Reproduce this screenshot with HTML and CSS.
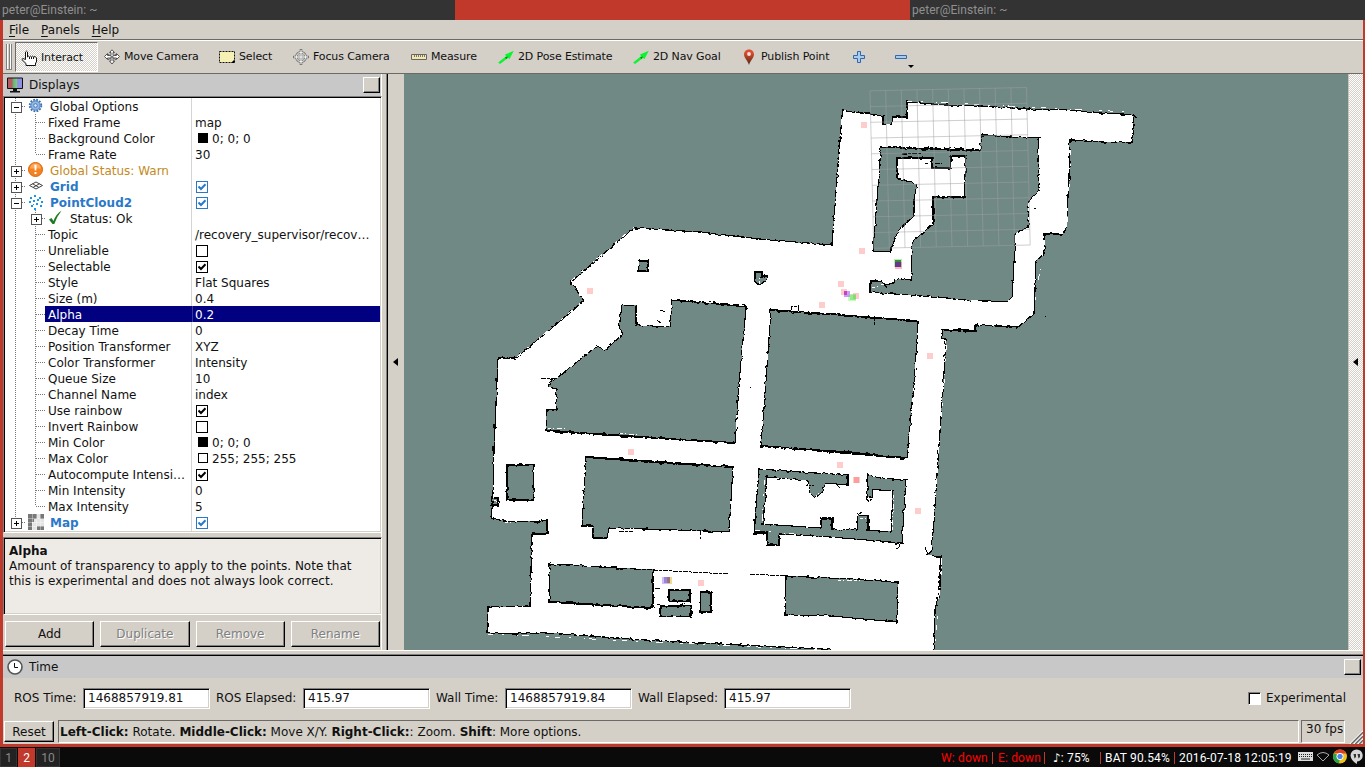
FILE: index.html
```html
<!DOCTYPE html>
<html lang="en">
<head>
<meta charset="utf-8">
<title>RViz</title>
<link rel="stylesheet" href="styles.css">
</head>
<body>
<svg class="defs" width="0" height="0">
  <symbol id="tick" viewBox="0 0 8 8"><path d="M.5 3.500 3 6 7.500 1.300" fill="none" stroke="currentColor" stroke-width="2"/></symbol>
  <symbol id="arrow" viewBox="0 0 16 16"><path d="M.2 13.500 8 7.200 7 5.500 15.800 1.800 11.500 10 10 9 2 15z" fill="#0bf52e"/><path d="M7 8.500 10 7.500 8.500 10z" fill="#087a1c"/></symbol>
</svg>

<header class="titles">
  <div class="title">peter@Einstein: ~</div>
  <div class="title active"></div>
  <div class="title">peter@Einstein: ~</div>
</header>

<main class="window">
  <nav class="menu"><span><u>F</u>ile</span><span><u>P</u>anels</span><span><u>H</u>elp</span></nav>

  <div class="toolbar">
    <i class="grip"></i>
    <div class="tool w-interact pressed">
      <svg width="16" height="16" viewBox="0 0 16 16"><path d="M4.500 9V2Q5.500.3 6.500 2V7Q7.500 5.400 8.500 7 9.500 5.400 10.500 7 11.500 5.400 12.500 7 14.500 5.500 15.500 8V12L14.500 13V15.500H5V13.500L.8 9.500Q1.500 7.500 4.500 9.500z" fill="#fff" stroke="#111"/><path d="M8.500 7V9M10.500 7V9M12.500 7V9" stroke="#111"/></svg>Interact</div>
    <div class="tool w-move">
      <svg width="16" height="16" viewBox="0 0 16 16"><path d="M8 .8 10.500 3.500H9V6.500H12.500V4.500L15.500 7.500 12.500 10.500V9H9V12H10.500L8 15 5.500 12H7V9H3.500V10.500L.5 7.500 3.500 4.500V6.500H7V3.500H5.500z" fill="#fff" stroke="#555"/><path d="M4 5 12 11M12 5 4 11" stroke="#666"/></svg>Move Camera</div>
    <div class="tool w-select">
      <svg width="16" height="16" viewBox="0 0 16 16"><path d="M.5 2.500h15v11H.5z" fill="#f7f0b4" stroke="#111" stroke-dasharray="2 1"/><path d="M15.500 10.500V14H12z"/></svg>Select</div>
    <div class="tool w-focus">
      <svg width="16" height="16" viewBox="0 0 16 16"><path d="M8 0V16M0 8H16" stroke="#777" stroke-width="2.600"/><circle cx="8" cy="8" r="4.700" fill="#d4d0c8" stroke="#777" stroke-width="2.600"/><path d="M8 4V12M4 8H12" stroke="#888" stroke-width="2.400"/><circle cx="8" cy="8" r="4.700" fill="none" stroke="#eee"/><path d="M8 1V15M1 8H15" stroke="#fff"/></svg>Focus Camera</div>
    <div class="tool w-measure">
      <svg width="16" height="16" viewBox="0 0 16 16"><path d="M.5 5.500h15v5H.5z" fill="#f2e9a8" stroke="#666"/><path d="M3.500 6V8M5.500 6V8M7.500 6V8M9.500 6V8M11.500 6V8M13.500 6V8" stroke="#777"/></svg>Measure</div>
    <div class="tool w-pose"><svg width="16" height="16"><use href="#arrow"/></svg>2D Pose Estimate</div>
    <div class="tool w-nav"><svg width="16" height="16"><use href="#arrow"/></svg>2D Nav Goal</div>
    <div class="tool w-publish">
      <svg width="16" height="16" viewBox="0 0 16 16"><defs><linearGradient id="pin" x2="0" y2="1"><stop offset=".2" stop-color="#df4b30"/><stop offset="1" stop-color="#4e2b16"/></linearGradient></defs><path d="M8 16C7 12 3 9 3 5.500 3-1.300 13-1.300 13 5.500 13 9 9 12 8 16z" fill="url(#pin)"/><circle cx="8" cy="5" r="1.900" fill="#eee4dc"/></svg>Publish Point</div>
    <div class="tool w-plus"><svg width="12" height="12" viewBox="0 0 12 12"><path d="M4.500.5h3v4h4v3h-4v4h-3v-4h-4v-3h4z" fill="#a9cbef" stroke="#2f68ad"/></svg></div>
    <div class="tool w-minus"><svg width="12" height="12" viewBox="0 0 12 12"><path d="M.5 4.500h11v3H.5z" fill="#a9cbef" stroke="#2f68ad"/></svg><i class="drop"></i></div>
  </div>

  <div class="work">
    <aside class="displays">
      <div class="dock-title">
        <svg width="16" height="16" viewBox="0 0 16 16"><defs><linearGradient id="scr"><stop offset=".3" stop-color="#b55a63"/><stop offset=".38" stop-color="#69b273"/><stop offset=".6" stop-color="#7fc68a"/><stop offset=".68" stop-color="#8d8fe0"/></linearGradient></defs><path d="M.5 1h15v10.500H.5z" fill="url(#scr)" stroke="#111"/><path d="M6 12h4v2H6zM3 14h10v1.500H3z" fill="#111"/></svg>
        Displays<b class="float"></b></div>
      <div class="tree">
        <div class="row"><div class="name"><i class="g first x minus"></i>
          <svg class="ic" viewBox="0 0 16 16"><circle cx="7.500" cy="7.500" r="5.800" fill="none" stroke="#3a6fae" stroke-width="1.800" stroke-dasharray="1.800 1.240"/><circle cx="7.500" cy="7.500" r="4.700" fill="#8fb6e2" stroke="#4a7dba"/><circle cx="7.500" cy="7.500" r="1.800" fill="#dce9f7" stroke="#4a7dba"/></svg><span>Global Options</span></div></div>
        <div class="row"><div class="name"><i class="g v"></i><i class="g t"></i><em>Fixed Frame</em></div><div class="val">map</div></div>
        <div class="row"><div class="name"><i class="g v"></i><i class="g t"></i><em>Background Color</em></div><div class="val"><i class="sw black"></i>0; 0; 0</div></div>
        <div class="row"><div class="name"><i class="g v"></i><i class="g l"></i><em>Frame Rate</em></div><div class="val">30</div></div>
        <div class="row warn"><div class="name"><i class="g x"></i>
          <svg class="ic" viewBox="0 0 16 16"><circle cx="7.500" cy="7.500" r="7" fill="#f58220" stroke="#d9640a"/><path d="M2 6.500Q2.500 1.500 7.500 1.500T13 6.500z" fill="#ffa85c"/><path d="M6.400 2.700h2.200L8.300 8.500H6.700zM6.500 10h2v2h-2z" fill="#fff"/></svg><span>Global Status: Warn</span></div></div>
        <div class="row blue"><div class="name"><i class="g x"></i>
          <svg class="ic" viewBox="0 0 16 16"><path d="M1.500 7.500 8 4 14.500 7.500 8 11zM4.500 5.700 11 9.500M11.500 5.700 5 9.500" fill="none" stroke="#444"/></svg><span>Grid</span></div><div class="val"><i class="ck"><svg><use href="#tick"/></svg></i></div></div>
        <div class="row blue"><div class="name"><i class="g x minus"></i>
          <svg class="ic" viewBox="0 0 16 16"><path d="M6 1h2v2H6zM11 3h2v2h-2zM2 3h2v2H2zM1 7h2v2H1zM5 6h2v2H5zM9 5h2v2H9zM13 7h2v2h-2zM8 9h2v2H8zM3 11h2v2H3zM12 11h2v2h-2zM6 14h2v2H6zM5 10h1v1H5z" fill="#1d93f0"/></svg><span>PointCloud2</span></div><div class="val"><i class="ck"><svg><use href="#tick"/></svg></i></div></div>
        <div class="row"><div class="name"><i class="g v"></i><i class="g x"></i>
          <svg class="ic" viewBox="0 0 16 16"><path d="M1 9.500 3.500 8 5.500 11Q8 4 13.500.8 8.500 7 6.300 14H4.500z" fill="#1d7a23"/></svg><span>Status: Ok</span></div></div>
        <div class="row"><div class="name"><i class="g v"></i><i class="g t"></i><em>Topic</em></div><div class="val">/recovery_supervisor/recov…</div></div>
        <div class="row"><div class="name"><i class="g v"></i><i class="g t"></i><em>Unreliable</em></div><div class="val"><i class="ck"></i></div></div>
        <div class="row"><div class="name"><i class="g v"></i><i class="g t"></i><em>Selectable</em></div><div class="val"><i class="ck"><svg><use href="#tick"/></svg></i></div></div>
        <div class="row"><div class="name"><i class="g v"></i><i class="g t"></i><em>Style</em></div><div class="val">Flat Squares</div></div>
        <div class="row"><div class="name"><i class="g v"></i><i class="g t"></i><em>Size (m)</em></div><div class="val">0.4</div></div>
        <div class="row sel"><div class="name"><i class="g v"></i><i class="g t"></i><em>Alpha</em></div><div class="val">0.2</div></div>
        <div class="row"><div class="name"><i class="g v"></i><i class="g t"></i><em>Decay Time</em></div><div class="val">0</div></div>
        <div class="row"><div class="name"><i class="g v"></i><i class="g t"></i><em>Position Transformer</em></div><div class="val">XYZ</div></div>
        <div class="row"><div class="name"><i class="g v"></i><i class="g t"></i><em>Color Transformer</em></div><div class="val">Intensity</div></div>
        <div class="row"><div class="name"><i class="g v"></i><i class="g t"></i><em>Queue Size</em></div><div class="val">10</div></div>
        <div class="row"><div class="name"><i class="g v"></i><i class="g t"></i><em>Channel Name</em></div><div class="val">index</div></div>
        <div class="row"><div class="name"><i class="g v"></i><i class="g t"></i><em>Use rainbow</em></div><div class="val"><i class="ck"><svg><use href="#tick"/></svg></i></div></div>
        <div class="row"><div class="name"><i class="g v"></i><i class="g t"></i><em>Invert Rainbow</em></div><div class="val"><i class="ck"></i></div></div>
        <div class="row"><div class="name"><i class="g v"></i><i class="g t"></i><em>Min Color</em></div><div class="val"><i class="sw black"></i>0; 0; 0</div></div>
        <div class="row"><div class="name"><i class="g v"></i><i class="g t"></i><em>Max Color</em></div><div class="val"><i class="sw"></i>255; 255; 255</div></div>
        <div class="row"><div class="name"><i class="g v"></i><i class="g t"></i><em>Autocompute Intensi…</em></div><div class="val"><i class="ck"><svg><use href="#tick"/></svg></i></div></div>
        <div class="row"><div class="name"><i class="g v"></i><i class="g t"></i><em>Min Intensity</em></div><div class="val">0</div></div>
        <div class="row"><div class="name"><i class="g v"></i><i class="g l"></i><em>Max Intensity</em></div><div class="val">5</div></div>
        <div class="row blue"><div class="name"><i class="g last x"></i>
          <svg class="ic" viewBox="0 0 16 16"><path d="M0 0h16v16H0z" fill="#e4e4e4"/><path d="M0 0h9v5H6v3H4v8H0zM12 0h4v5h-4zM9 12h7v4H9z" fill="#777"/><path d="M4.500 0V16M8.500 0V16M12.500 0V16M0 4.500H16M0 8.500H16M0 12.500H16" stroke="#fff" stroke-opacity=".35"/></svg><span>Map</span></div><div class="val"><i class="ck"><svg><use href="#tick"/></svg></i></div></div>
      </div>
      <div class="help"><b>Alpha</b><br>Amount of transparency to apply to the points. Note that<br>this is experimental and does not always look correct.</div>
      <div class="buttons"><div class="btn">Add</div><div class="btn off">Duplicate</div><div class="btn off">Remove</div><div class="btn off">Rename</div></div>
    </aside>
    <div class="splitter"><i class="tri"></i></div>

    <svg class="map" width="944" height="576" viewBox="404 74 944 576">
      <defs><filter id="rough" filterUnits="userSpaceOnUse" x="404" y="74" width="944" height="576" color-interpolation-filters="sRGB"><feTurbulence type="fractalNoise" baseFrequency=".22" numOctaves="2" seed="4"/><feDisplacementMap in="SourceGraphic" scale="3.200" xChannelSelector="R" yChannelSelector="G"/></filter></defs>
      <g filter="url(#rough)">
      <!-- free space -->
      <g class="free">
        <path d="M842.500 110.500 862 113 883 115.500V124.500H892L893 117H907V102L945 105 981 106 1027 109 1066 110 1100 113 1133 114.500 1134 126 1132 143 1102 142 1070 140 1069 178 1067 215 1066 229 1062 234H1045L1044 254 1036 261 1035 290 1034 314 1018 327 976 325V331L960 329 943 330 942 338 946 339 943 390 938 460 934 520 931 552 926 555 941 557 940 590 935 610 934 654H860L823 649 760 646 700 643 660 641 645 640 590 636 545 633 515 634 487 633 488 607 530 606 531 570 532 534 547 534V520L537 522 502 521 491 517 492 508 500 502 493 497 494 450 498 358H516L548 331 584 301 571 282 602 255 634 228 700 232 760 239 832 245 837 178z"/>
      </g>
      <!-- unknown areas enclosed by walls -->
      <g class="hole">
        <path d="M881 147 920 149 980 151 982 135 1010 137 1039 138 1038 160 1039 191 1029 201 1028 227 1015 234 1014 262 1012 298 1007 302 965 300 920 296 870 292V281L882 281 885 285 894 283 895 279 911 280 912 242 933 224V197L964 197 966 156H951V168H932V158H897V178L917 184 914 199V216L898 231 890 252 873 251 877 200z"/>
        <path d="M622 305 636 306V325L670 327 672 300 700 302 746 307 744 330 740 373 735 443 680 439 600 434 546 430 547 410H556L557 389 548 387 550 382 557 378 598 345 604 351 623 334 619 328z"/>
        <path d="M771 310 835 314 918 322 915 370 913 395 907 458 850 452 805 449 761 446 766 380z"/>
        <path d="M586 457 650 461 733 467 731 500 729 532 680 530 609 528 607 538H593L592 526H582z"/>
        <path d="M507 465H534L533.500 500H507z"/>
        <path d="M759 469 800 472 848 475V485L825 483 823 491 815 498 810 493 808 481 767 477 763 524 821 528 822 519H832V529L857 530 858 515 868 516V530L891 532 893 491 880 490 873 489 872 497 867 498 868 475 880 478 906 480 904 510 902 543 878 541 830 537 780 534 779 545H767L766 533H754z"/>
        <path d="M550 564 600 567 653 570 652 608 600 605 549 602z"/>
        <path d="M786 576 850 579 898 582 897 622 830 616 785 615z"/>
        <path d="M669 590H690V601H669zM701 592H711V612H700zM660 606H691V617L660 616zM639 261H648V271H638zM755 272H762V276L768 276 765 281 760 285 755 282zM492 498H498V505H492z"/>
      </g>
      <!-- thick wall sections -->
      <g class="wall">
        <path d="M885 147 980 150M935 149 964 150M675 300 745 306M771 310 917 321M547 431 735 443M586 457 732 467M620 460 700 465M600 434 650 438M762 446 906 458M550 602 652 608M653 571V608M754 532H767V545H779V535M941 330 974 331 976 323M848 475V486M941 557 939 590M743 305 747 306"/>
      </g>
      </g>
      <!-- gaps where the laser return is missing -->
      <g class="gap">
        <path d="M842 120 833 240M907 101 1130 112M1040 150 1041 190M872 160 870 245M1071 150 1067 225M1045 240 1035 300M883 146 980 150M870 293 1005 303M571 281 634 227M517 357 582 302M499 370 493 500M672 299 746 306M747 320 735 440M770 320 761 440M919 330 908 455M947 345 931 550M585 460 581 524M734 470 730 530M488 634 820 650M550 563 650 569M786 574 898 581M782 617 897 623M942 558 935 645M654 574 655 606M755 530 900 545M536 468V498M669 602H690M712 595V610M638 261V270M765 480 762 522M892 494 890 530"/>
      </g>
      <g class="wall">
        <path class="thin" d="M653 570 729 574M750 574 786 576M541 379 556 378M902 153H922M902 155 908 154M925 163H928M935 163H942M1034 208H1036M1133 115 1137 118M884 284 887 288M760 278 768 275M619 531H633M700 530V540M675 607 685 603M820 525V517L834 518M858 515 862 512M866 498 869 502 873 497M895 545 899 543 900 547 896 549M806 485H814M837 485 840 488M660 310 666 312M657 320 662 324M874 316V325M791 310V307L798 306V311M925 547 928 555M593 528V538M655 588H660M657 604 665 607M1045 316h1M750 387h1"/>
      </g>
      <g class="specks"><path d="M548 428 565 429M620 433 637 435M671 540 730 533M494 500 500 503M505 522 512 523M808 484 811 496M815 498 820 492M825 484 831 487M860 518H867M776 478 806 481M770 520 817 524M894 495 892 530M830 637 840 637M838 580 860 581M942 562 941 575M946 340 944 365M737 415 736 440M741 392 740 405M872 288 884 284M759 284 760 275"/></g>
      <path class="grid" transform="matrix(15.65 -.33 .37 15.75 870 90.800)" d="M0 0H10M0 1H10M0 2H10M0 3H10M0 4H10M0 5H10M0 6H10M0 7H10M0 8H10M0 9H10M0 10H10M0 0V10M1 0V10M2 0V10M3 0V10M4 0V10M5 0V10M6 0V10M7 0V10M8 0V10M9 0V10M10 0V10"/>
      <path class="points" d="M861 122h6v6h-6zM859 248h6v6h-6zM838 281h6v6h-6zM819 302h6v6h-6zM587 288h6v6h-6zM927 353h6v6h-6zM628 449h6v6h-6zM837 462h6v6h-6zM915 508h6v6h-6zM698 580h6v6h-6zM841 289h6v6h-6zM853 293h6v6h-6zM853 477h7v6h-7z"/>
      <rect x="854" y="477" width="5" height="6" fill="#ff9c9c"/>
      <rect x="844" y="291" width="6" height="6" fill="#8000ff" opacity=".4"/><rect x="844" y="291" width="3" height="4" fill="#c020a0" opacity=".6"/>
      <rect x="848" y="295" width="8" height="6" fill="#40ff20" opacity=".3"/><rect x="850" y="294" width="6" height="6" fill="#30c830" opacity=".35"/>
      <rect x="894" y="259" width="8" height="8" fill="#60e040" opacity=".45"/><rect x="895" y="262" width="7" height="7" fill="#ff5070" opacity=".4"/><rect x="895" y="260" width="6" height="3" fill="#3f8a3c"/><rect x="895" y="262" width="6" height="5" fill="#63388f"/>
      <rect x="662" y="577" width="8" height="7" fill="#b8a0ff" opacity=".7"/><rect x="668" y="577" width="4" height="7" fill="#e0d060" opacity=".7"/><rect x="664" y="577" width="6" height="6" fill="#806fc0" opacity=".7"/><rect x="667" y="577" width="3" height="6" fill="#a06c70" opacity=".8"/>
    </svg>
    <div class="splitter right"><i class="tri"></i></div>
  </div>

  <section class="time">
    <div class="dock-title">
      <svg width="16" height="16" viewBox="0 0 16 16"><circle cx="8" cy="8" r="7" fill="#fff" stroke="#555" stroke-width="1.600"/><path d="M7.500 4V8.500H11" fill="none" stroke="#111"/></svg>
      Time<b class="float"></b></div>
    <div class="fields">
      <label class="f1">ROS Time:</label><div class="inp">1468857919.81</div>
      <label class="f2">ROS Elapsed:</label><div class="inp">415.97</div>
      <label class="f3">Wall Time:</label><div class="inp">1468857919.84</div>
      <label class="f4">Wall Elapsed:</label><div class="inp">415.97</div>
      <span class="exp"><i></i>Experimental</span>
    </div>
  </section>
  <footer class="status">
    <div class="btn reset">Reset</div>
    <div class="hint"><b>Left-Click:</b> Rotate. <b>Middle-Click:</b> Move X/Y. <b>Right-Click:</b>: Zoom. <b>Shift</b>: More options.</div>
    <div class="fps">30 fps</div>
    <svg class="sizegrip" width="14" height="14" viewBox="0 0 14 14"><path d="M1 14 14 1M5 14 14 5M9 14 14 9" stroke="#fff" stroke-width="1.200"/><path d="M2.300 14 14 2.300M6.300 14 14 6.300M10.300 14 14 10.300" stroke="#666" stroke-width="1.400"/></svg>
  </footer>
</main>

<div class="bar">
  <span class="ws w17">1</span><span class="ws w17 on">2</span><span class="ws w24">10</span>
  <div class="info"><span class="red s1">W: down</span><span class="red s2">E: down</span><span class="s3"><i class="note">♪</i>: 75%</span><span class="s4">BAT 90.54%</span><span class="s5">2016-07-18 12:05:19</span></div>
  <svg class="tray" width="67" height="20" viewBox="0 0 67 20">
    <path d="M0 5h15v9H0z" fill="#ddd"/><path d="M1 7.500H14M1 9.500H14" stroke="#222" stroke-dasharray="1 1"/><path d="M3 12H12" stroke="#222"/>
    <path d="M19 8Q25 3 31 8L25 14z" fill="none" stroke="#aaa"/>
    <circle cx="42" cy="9.500" r="7" fill="#f2c21a"/><path d="M42 9.500 36 6A7 7 0 0 0 41 16.500z" fill="#2aa14b"/><path d="M36 6A7 7 0 0 1 48.300 6.500H42z" fill="#df3a2c"/><circle cx="42" cy="9.500" r="3.200" fill="#4b86e8" stroke="#fff"/>
    <path d="M58.500 2.500a6 6 0 0 1 .5 12V17q-6-3-6.500-8.500a6 6 0 0 1 6-6z" fill="#d5d5d5"/><path d="M55.500 7h2.500v3l-1.500 1.500zM59.500 7H62v3l-1.500 1.500z" fill="#333"/>
  </svg>
</div>
</body>
</html>
```
FILE: styles.css
```css
* { box-sizing: border-box; }
body { margin: 0; width: 1365px; height: 767px; overflow: hidden; background: #0a0a0a; color: #111; font: 12px/15px "DejaVu Sans", sans-serif; white-space: nowrap; display: flex; flex-direction: column; }
i, em { font-style: normal; }
svg { display: block; flex: none; }
.defs { position: absolute; }

.titles { display: flex; height: 20px; }
.title { width: 455px; background: #333; color: #909090; font: 12px/20px Roboto, sans-serif; letter-spacing: .04px; padding-left: 2px; }
.title.active { background: #c0392b; }

.window { height: 727px; background: #d4d0c8; border: solid #c0392b; border-width: 0 2px 3px 3px; display: flex; flex-direction: column; }
.menu { height: 21px; border-bottom: 1px solid #fff; box-shadow: inset 0 -1px #6c6a66; padding: 3px 0 0 6px; display: flex; gap: 12px; }
.menu u { text-underline-offset: 2px; }
.toolbar { height: 33px; border-bottom: 1px solid #6c6a66; display: flex; font-size: 11px; letter-spacing: -.13px; padding-left: 3px; }
.grip { width: 6px; height: 26px; margin: 3px 3px 0 0; border: solid #808080; border-width: 0 1px 1px; background: linear-gradient(90deg, #fff 1px, #d4d0c8 1px 2px, #808080 2px 3px, #fff 3px); }
.tool { display: flex; align-items: center; gap: 4px; padding-left: 6px; height: 31px; padding-bottom: 1px; }
.tool svg { margin-top: 2px; }
.pressed { height: 30px; margin-top: 1px; padding: 0 0 0 5px; border: 1px solid #6c6a66; border-right-color: #fff; border-bottom-color: #fff; background: repeating-conic-gradient(#fff 0 25%, #d4d0c8 0 50%) 0 0 / 2px 2px; }
.w-interact { width: 83px; } .w-move { width: 115px; } .w-select { width: 74px; } .w-focus { width: 118px; }
.w-measure { width: 87px; } .w-pose { width: 135px; } .w-nav { width: 108px; } .w-publish { width: 112px; }
.w-plus { width: 42px; } .w-minus { width: 30px; gap: 1px; }
.drop { border: 3px solid transparent; border-top-color: #000; border-bottom: 0; margin-top: 21px; }

.work { display: flex; height: 576px; }
.displays { width: 385px; border-right: 1px solid #000; box-shadow: inset -1px 0 #808080, inset -5px 0 #d4d0c8, inset -6px 0 #fff; padding-right: 6px; display: flex; flex-direction: column; }
.dock-title { height: 22px; background: #c8c8c8; display: flex; align-items: center; padding: 0 1px 0 4px; gap: 6px; }
.float { width: 17px; height: 16px; margin-left: auto; background: #d4d0c8; border: 1px solid; border-color: #fff #000 #000 #fff; box-shadow: inset -1px -1px #808080; }
.time .float { margin-right: 1px; }
.tree { width: 379px; height: 437px; border: 1px solid; border-color: #808080 #fff #fff #808080; background: linear-gradient(#d5d5d5, #d5d5d5) 187px 0 / 1px 100% no-repeat #fff; box-shadow: inset 1px 1px #000, inset -1px -1px #d4d0c8; padding: 1px 1px 0 1px; }
.row { display: flex; height: 16px; line-height: 18px; }
.name { width: 187px; display: flex; }
.name span { margin-left: 6px; }
.name em { padding-left: 3px; flex: 1; }
.val { flex: 1; padding-left: 3px; display: flex; }
.ic { width: 16px; height: 16px; margin-left: 3px; }
.g { width: 20px; height: 16px; flex: none; display: flex; --v: repeating-linear-gradient(#777 0 1px, #fff 1px 2px); --h: repeating-linear-gradient(90deg, #777 0 1px, #fff 1px 2px);
  background: var(--v) 10px 0 / 1px 100% no-repeat, var(--h) 11px 8px / 9px 1px no-repeat; }
.g.v { background: var(--v) 10px 0 / 1px 100% no-repeat; }
.g.l, .g.last { background: var(--v) 10px 0 / 1px 8px no-repeat, var(--h) 11px 8px / 9px 1px no-repeat; }
.x::before { content: ""; width: 9px; height: 9px; margin: 4px 0 0 6px; border: 1px solid #555; background: linear-gradient(#000, #000) center / 5px 1px no-repeat, linear-gradient(#000, #000) center / 1px 5px no-repeat, #fff; }
.x.minus::before { background: linear-gradient(#000, #000) center / 5px 1px no-repeat, #fff; }
.warn { color: #c48a1c; }
.blue .name { color: #2a78c8; font-weight: bold; }
.sel em, .sel .val { background: #000080; color: #fff; height: 16px; }
.sel .val { box-shadow: inset 1px 0 #38389a; }
.ck { width: 12px; height: 12px; margin: 3px 0 0 1px; border: 1px solid #000; background: #fff; color: #000; }
.ck svg { width: 8px; height: 8px; margin: 1px; }
.blue .ck { border-color: #2a78c8; color: #2a78c8; }
.sw { width: 10px; height: 10px; margin: 3px 4px 0 3px; border: 1px solid #000; background: #fff; }
.sw.black { background: #000; }
.help { width: 379px; height: 78px; margin-top: 4px; border: 1px solid; border-color: #808080 #fff #fff #808080; box-shadow: inset 1px 1px #000, inset -1px -1px #d4d0c8; background: #eeebe7; padding: 6px 0 0 5px; }
.buttons { display: flex; gap: 6px; padding: 6px 1px 0 2px; }
.btn { flex: 1; height: 26px; line-height: 24px; text-align: center; border: 1px solid; border-color: #fff #000 #000 #fff; box-shadow: inset -1px -1px #808080; }
.btn.off { color: #808080; text-shadow: 1px 1px #fff; }

.splitter { width: 16px; display: flex; align-items: center; padding-left: 5px; }
.splitter.right { padding-left: 4px; background: repeating-conic-gradient(#fff 0 25%, #d4d0c8 0 50%) 0 0 / 2px 2px; border-left: 1px solid #c8c4bc; width: 15px; }
.tri { border: 4px solid transparent; border-right: 5px solid #000; border-left: 0; }
.map { background: #708985; shape-rendering: crispEdges; overflow: hidden; }
.free path { fill: #fff; stroke: #000; stroke-width: 1.2; }
.hole path { fill: #708985; stroke: #000; stroke-width: 1.1; }
.gap path { fill: none; stroke: #fff; stroke-width: 1; stroke-dasharray: 5 9 2 13 1 4 7 17 3 6; }
.wall path { fill: none; stroke: #000; stroke-width: 2; stroke-dasharray: 21 1 9 0 13 1; }
.wall .thin { stroke-width: 1; stroke-dasharray: 5 1 3 1; }
.specks path { fill: none; stroke: #fff; stroke-width: 1; stroke-dasharray: 3 2 1 3 5 2; }
.grid { fill: none; stroke: #a0a0a4; stroke-opacity: .5; vector-effect: non-scaling-stroke; shape-rendering: auto; }
.points { fill: #ffcccc; }

.time { border-top: 1px solid #fff; box-shadow: inset 0 3px #d4d0c8, inset 0 4px #808080, inset 0 5px #000; padding-top: 5px; height: 70px; }
.fields { display: flex; align-items: center; height: 40px; padding-left: 11px; }
.f1 { width: 69px; } .f2 { width: 93px; padding-left: 6px; } .f3 { width: 75px; padding-left: 6px; } .f4 { width: 92px; padding-left: 6px; }
.inp { width: 127px; height: 21px; line-height: 18px; background: #fff; border: 1px solid; border-color: #808080 #fff #fff #808080; box-shadow: inset 1px 1px #000, inset -1px -1px #d4d0c8; padding-left: 4px; }
.exp { margin-left: auto; margin-right: 17px; display: flex; gap: 5px; align-items: center; }
.exp i { width: 13px; height: 13px; background: #fff; border: 1px solid; border-color: #808080 #fff #fff #808080; box-shadow: inset 1px 1px #000; }
.status { height: 24px; display: flex; padding-left: 1px; }
.reset { flex: none; width: 50px; height: 21px; line-height: 20px; margin: 1px 4px 0 0; }
.hint { width: 1241px; height: 23px; line-height: 22px; padding-left: 1px; border: 1px solid; border-color: #6c6a66 #fff #fff #6c6a66; }
.fps { width: 44px; height: 23px; line-height: 17px; margin-left: 2px; padding-left: 4px; border: 1px solid; border-color: #6c6a66 #fff #fff #6c6a66; }
.sizegrip { margin: 10px 0 0 auto; }

.bar { height: 20px; display: flex; font: 12px/20px Roboto, sans-serif; color: #fff; }
.ws { height: 19px; margin: 1px 1px 0 0; background: #222; border: 1px solid #333; color: #888; text-align: center; line-height: 18px; }
.ws.on { background: #c0392b; border-color: #c0392b; color: #fff; }
.w17 { width: 17px; } .w24 { width: 24px; }
.info { margin-left: auto; display: flex; line-height: 23px; letter-spacing: .15px; }
.info span { height: 20px; background: linear-gradient(#c0392b, #c0392b) right 5px / 1px 12px no-repeat; }
.info .red { color: #f00; }
.note { font: 12px/20px "DejaVu Sans", sans-serif; }
.s1 { width: 52px; } .s2 { width: 52px; padding-left: 5px; } .s3 { width: 56px; padding-left: 8px; } .s4 { width: 74px; padding-left: 4px; }
.info .s5 { width: 119px; padding-left: 4px; background: none; }
.tray { margin-left: 4px; }
```
